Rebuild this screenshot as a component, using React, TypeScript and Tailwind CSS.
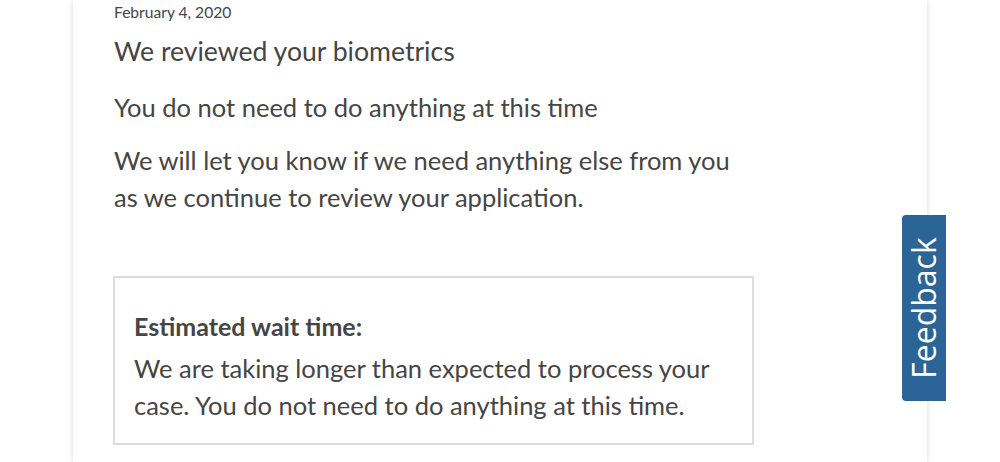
import React from 'react';

const font = { fontFamily: 'Lato, "Open Sans", sans-serif' };

const App: React.FC = () => {
  return (
    <div className="relative h-[462px] w-[1000px] overflow-hidden bg-white text-[#454545]" style={font}>
      <div className="mx-[73px] h-full bg-white px-[41px] shadow-[0_0_6px_rgba(0,0,0,0.15)]">
        <p className="pt-[2px] text-[15.6px] leading-[20px]">February 4, 2020</p>
        <h2 className="mt-[14px] text-[26.6px] leading-[30px]">We reviewed your biometrics</h2>
        <p className="mt-[26px] text-[25.5px] leading-[30px]">You do not need to do anything at this time</p>
        <p className="mt-[20px] w-[625px] text-[25.5px] leading-[37px]">
          We will let you know if we need anything else from you as we continue to review your application.
        </p>
        <div className="-ml-px mt-[60px] h-[169px] w-[641px] border-2 border-[#dcdcdc] px-[19px] pt-[33px]">
          <p className="text-[25px] font-bold leading-[30px]">Estimated wait time:</p>
          <p className="mt-[9px] text-[25.5px] leading-[37px]">
            We are taking longer than expected to process your case. You do not need to do anything at this time.
          </p>
        </div>
      </div>
      <div className="absolute left-[902px] top-[215px] flex h-[186px] w-[44px] items-center justify-center rounded-l-[4px] bg-[#2b6496]">
        <span className="-rotate-90 whitespace-nowrap text-[32px] text-white" style={{ fontFamily: '"Open Sans", sans-serif' }}>
          Feedback
        </span>
      </div>
    </div>
  );
};

export default App;
